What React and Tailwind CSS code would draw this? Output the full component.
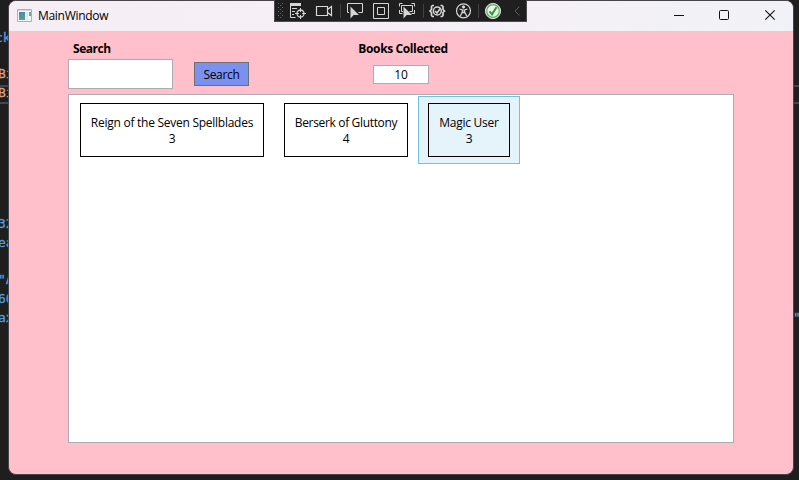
const codeLines = [
  { text: 'ck', top: 'top-[29px]', left: '-left-[5px]', color: 'text-[#569cd6]' },
  { text: 'Bi', top: 'top-[65px]', left: '-left-[2px]', color: 'text-[#d69d85]' },
  { text: 'Bi', top: 'top-[84px]', left: '-left-[2px]', color: 'text-[#d69d85]' },
  { text: '32', top: 'top-[215px]', left: '-left-[2px]', color: 'text-[#569cd6]' },
  { text: 'ea', top: 'top-[234px]', left: '-left-[2px]', color: 'text-[#569cd6]' },
  { text: '"A', top: 'top-[271px]', left: '-left-[2px]', color: 'text-[#569cd6]' },
  { text: '60', top: 'top-[290px]', left: '-left-[2px]', color: 'text-[#569cd6]' },
  { text: 'ax', top: 'top-[309px]', left: '-left-[2px]', color: 'text-[#569cd6]' },
  { text: '"', top: 'top-[309px]', left: 'left-[793px]', color: 'text-[#569cd6]' },
];

const books = [
  { title: 'Reign of the Seven Spellblades', count: 3, width: 'w-[204px]', tracking: 'tracking-[-0.26px]' },
  { title: 'Berserk of Gluttony', count: 4, width: 'w-[144px]', tracking: 'tracking-[-0.34px]' },
  { title: 'Magic User', count: 3, width: 'w-[102px]', tracking: 'tracking-[-0.25px]', selected: true },
];

function Editor() {
  return (
    <div className="absolute inset-0 font-['DejaVu_Sans_Mono',monospace] text-[13px] leading-[18px] [-webkit-text-stroke:0.3px_currentColor]">
      <div className="absolute top-[85px] left-0 h-[19px] w-full border-y-2 border-[#464646]" />
      {codeLines.map((l, i) => (
        <span key={i} className={`absolute whitespace-pre ${l.top} ${l.left} ${l.color}`}>{l.text}</span>
      ))}
    </div>
  );
}

function DebugToolbar() {
  return (
    <div className="absolute top-0 left-[274px] h-[22px] w-[253px] border border-t-0 border-[#4b4b4d] bg-[#1f1f1f]">
      <svg width="251" height="22" viewBox="275 0 251 22" fill="none" stroke="#d6d6d6" strokeWidth="1">
        <g fill="#686868" stroke="none">
          {[3, 7, 11, 15].map((y) => (
            <g key={y}>
              <rect x="278" y={y} width="1" height="1" />
              <rect x="282" y={y} width="1" height="1" />
              <rect x="280" y={y + 2} width="1" height="1" />
            </g>
          ))}
        </g>
        <path d="M290 4.5h11" strokeWidth="3" />
        <path d="M290.500 5v12.500h5M292 8.500h5M292 11.500h3M292 14.500h2" />
        <circle cx="300.500" cy="13.500" r="3.500" strokeWidth="1.300" />
        <path d="M300.500 8v4M300.500 15v4M295 13.500h4M302 13.500h4" />
        <path d="M316.500 6.500h11v9h-11zM327.500 9.500l4-3v9l-4-3" strokeWidth="1.200" />
        <path d="M340.500 4v14M423.500 4v14M478.500 4v14" stroke="#424245" />
        <path d="M349 12.500h-1.500v-9h15v9h-4" />
        <path d="M350.500 6.500v12l3.200-3.500h5.300z" fill="#d6d6d6" stroke="none" />
        <path d="M373.500 3.500h15v15h-15zM377.500 7.500h7v7h-7z" />
        <path d="M399.500 6.500v-3h3M411.500 3.500h3v3M414.500 10v3.500h-3M399.500 10v3.500h3M403 11.500h-1.500v-6h11v6h-3" />
        <path d="M403.500 6.500v12l3.200-3.500h5.300z" fill="#d6d6d6" stroke="none" />
        <path d="M434 5.500h-1.500l-1 1v3l-1.500 1.500 1.500 1.500v3l1 1h1.500M440.500 5.500h1.500l1 1v3l1.500 1.500-1.500 1.500v3l-1 1h-1.500" strokeWidth="1.700" />
        <circle cx="437.300" cy="11" r="4" strokeWidth="1.500" />
        <path d="M435 11l2 2 3.500-5" strokeWidth="1.500" />
        <circle cx="463.500" cy="10.800" r="7" strokeWidth="1.200" />
        <circle cx="463.500" cy="7" r="1.200" fill="#d6d6d6" />
        <path d="M459.500 9l2.800 1v2l-2 4M467.500 9l-2.800 1v2l2 4M462.300 10h2.400M462.500 13l1-1 1 1" strokeWidth="1.200" />
        <circle cx="493" cy="11" r="7.600" fill="#e9f3e9" stroke="#dedede" />
        <circle cx="493" cy="11" r="6.300" stroke="#58ac5c" strokeWidth="1.200" />
        <path d="M489.500 11.300l2.500 3 4.500-7" stroke="#299b2e" strokeWidth="2" />
        <path d="M519.500 6.500l-4.500 4.500 4.500 4.500" stroke="#5c5c5c" />
      </svg>
    </div>
  );
}

function TitleBar() {
  return (
    <header className="flex h-[30px] shrink-0 items-center bg-linear-to-r from-[#f5eff5] via-[#f6eff6] to-[#f1f2f7] pl-2">
      <svg className="mt-[-1px]" width="15" height="13" viewBox="0 0 15 13">
        <defs>
          <linearGradient id="pane" x1="0" y1="0" x2="0" y2="1">
            <stop stopColor="#4b86b4" />
            <stop offset="1" stopColor="#57a481" />
          </linearGradient>
        </defs>
        <path d="M.5.5h14v12H.5z" fill="#f5f6f7" stroke="#a9b0b7" />
        <path d="M1 1.500h13" stroke="#d5d9dc" />
        <path d="M2 3h6v8H2z" fill="url(#pane)" />
        <path d="M9 3h2v8H9z" fill="#e2e5e8" />
        <path d="M12 3h2v4h-2z" fill="#69a8a0" />
      </svg>
      <span className="ml-[6px] text-[12px] leading-4 tracking-[-0.3px]">MainWindow</span>
      <svg className="ml-auto" width="130" height="30" viewBox="663 1 130 30" fill="none" stroke="#111">
        <path d="M674 15.500h10" />
        <rect x="719.500" y="10.500" width="9" height="9" rx="1" />
        <path d="M765.300 10.300l9.400 9.400M774.700 10.300l-9.400 9.400" strokeWidth="1.100" />
      </svg>
    </header>
  );
}

function BookItem({ book }) {
  return (
    <li className={`h-[68px] border px-[9px] pt-[6px] ${book.width} ${book.selected ? 'border-[#70c0e7] bg-[#e5f3fb]' : 'border-transparent'}`}>
      <div className={`h-[54px] border border-black pt-[11px] text-center leading-4 whitespace-nowrap ${book.tracking}`}>
        <p>{book.title}</p>
        <p>{book.count}</p>
      </div>
    </li>
  );
}

export default function App() {
  return (
    <div className="relative h-[480px] w-[799px] overflow-hidden bg-[#1e1e1e] font-['Open_Sans',sans-serif] text-[12px] text-black">
      <Editor />
      <div className="absolute top-0 left-2 h-[475px] w-[786px] overflow-hidden rounded-lg border border-[#48454a] bg-[#ffc0cb]">
        <div className="flex h-full flex-col">
          <TitleBar />
          <main className="flex flex-1 flex-col px-[59px]">
            <div className="flex h-[63px] items-start">
              <div className="w-[105px] pt-[10px]">
                <label className="block pl-[5px] leading-4 font-bold tracking-[-0.47px]">Search</label>
                <input className="mt-[2px] block h-[30px] w-[105px] border border-[#abadb3] bg-white px-1 outline-none" />
              </div>
              <button className="mt-[31px] ml-[21px] h-[24px] w-[55px] border border-[#707070] bg-[#7b91f0] pt-px leading-[22px] tracking-[-0.3px]">Search</button>
              <div className="ml-[104px] flex w-[100px] flex-col items-center pt-[10px]">
                <span className="leading-4 font-bold tracking-[-0.38px] whitespace-nowrap">Books Collected</span>
                <span className="mt-[8px] ml-[-4px] h-[19px] w-[56px] border border-[#abadb3] bg-white text-center leading-[17px]">10</span>
              </div>
            </div>
            <ul className="flex h-[349px] w-[666px] items-start border border-[#abadb3] bg-white p-px">
              {books.map((b) => <BookItem key={b.title} book={b} />)}
            </ul>
          </main>
        </div>
      </div>
      <DebugToolbar />
    </div>
  );
}
